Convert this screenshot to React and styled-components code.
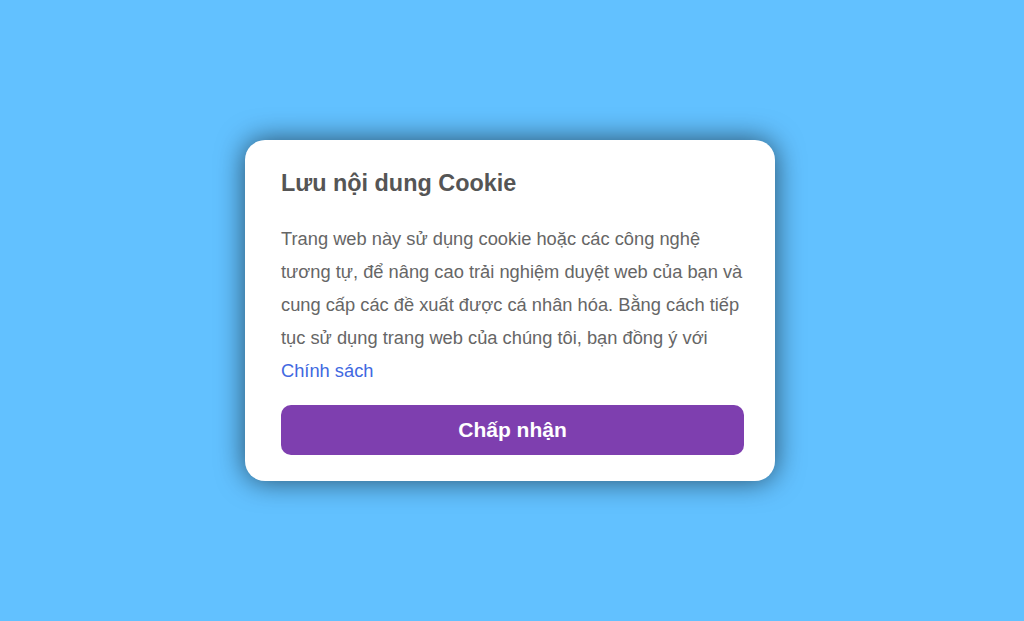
import styled, { createGlobalStyle } from 'styled-components'

const Global = createGlobalStyle`
  html, body {
    margin: 0;
    padding: 0;
  }
  body {
    font-family: 'Liberation Sans', Arial, sans-serif;
    background: #62c1ff;
  }
`

const Page = styled.div`
  width: 100%;
  height: 621px;
  display: flex;
  align-items: center;
  justify-content: center;
  background: #62c1ff;
`

const Card = styled.div`
  width: 530px;
  box-sizing: border-box;
  margin-right: 4px;
  padding: 29px 31px 26px 36px;
  background: #fff;
  border-radius: 20px;
  box-shadow: 0 0 28px rgba(0, 0, 0, 0.6);
`

const Title = styled.h2`
  margin: 0 0 25px;
  font-size: 23.4px;
  line-height: 28px;
  font-weight: 700;
  color: #555;
`

const Text = styled.p`
  margin: 0 -2px 18px 0;
  font-size: 18.3px;
  line-height: 33px;
  color: #666;
`

const Link = styled.a`
  color: #4169e1;
  text-decoration: none;
`

const Button = styled.button`
  display: block;
  width: 100%;
  height: 50px;
  border: none;
  border-radius: 10px;
  background: #7e3faf;
  color: #fff;
  font-family: inherit;
  font-size: 21px;
  font-weight: 700;
  cursor: pointer;
`

const App = () => (
  <>
    <Global />
    <Page>
      <Card>
        <Title>Lưu nội dung Cookie</Title>
        <Text>
          Trang web này sử dụng cookie hoặc các công nghệ tương tự, để nâng cao trải nghiệm
          duyệt web của bạn và cung cấp các đề xuất được cá nhân hóa. Bằng cách tiếp tục sử
          dụng trang web của chúng tôi, bạn đồng ý với <Link href="#">Chính sách</Link>
        </Text>
        <Button>Chấp nhận</Button>
      </Card>
    </Page>
  </>
)

export default App
